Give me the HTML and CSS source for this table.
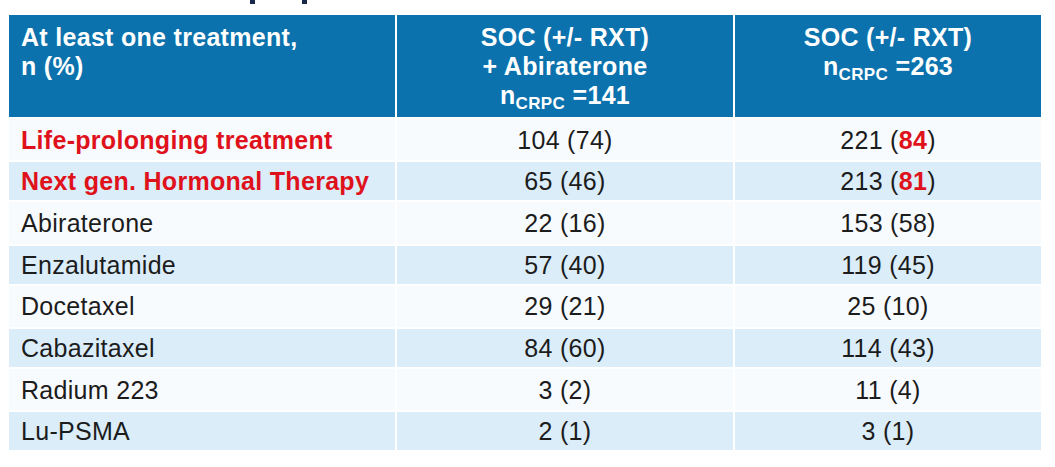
FILE: index.html
```html
<!DOCTYPE html>
<html>
<head>
<meta charset="utf-8">
<link rel="stylesheet" href="styles.css">
</head>
<body>
<div class="title-cut"><span class="stub"></span><span class="stub"></span></div>
<div class="table">
  <div class="row head">
    <div class="cell left"><span>At least one treatment,<br>n (%)</span></div>
    <div class="cell"><span>SOC (+/- RXT)<br>+ Abiraterone<br>n<sub>CRPC</sub> =141</span></div>
    <div class="cell"><span>SOC (+/- RXT)<br>n<sub>CRPC</sub> =263</span></div>
  </div>
  <div class="row light">
    <div class="cell left red b"><span>Life-prolonging treatment</span></div>
    <div class="cell"><span>104 (74)</span></div>
    <div class="cell"><span>221 (<span class="red b">84</span>)</span></div>
  </div>
  <div class="row blue">
    <div class="cell left red b"><span>Next gen. Hormonal Therapy</span></div>
    <div class="cell"><span>65 (46)</span></div>
    <div class="cell"><span>213 (<span class="red b">81</span>)</span></div>
  </div>
  <div class="row light">
    <div class="cell left"><span>Abiraterone</span></div>
    <div class="cell"><span>22 (16)</span></div>
    <div class="cell"><span>153 (58)</span></div>
  </div>
  <div class="row blue">
    <div class="cell left"><span>Enzalutamide</span></div>
    <div class="cell"><span>57 (40)</span></div>
    <div class="cell"><span>119 (45)</span></div>
  </div>
  <div class="row light">
    <div class="cell left"><span>Docetaxel</span></div>
    <div class="cell"><span>29 (21)</span></div>
    <div class="cell"><span>25 (10)</span></div>
  </div>
  <div class="row blue">
    <div class="cell left"><span>Cabazitaxel</span></div>
    <div class="cell"><span>84 (60)</span></div>
    <div class="cell"><span>114 (43)</span></div>
  </div>
  <div class="row light">
    <div class="cell left"><span>Radium 223</span></div>
    <div class="cell"><span>3 (2)</span></div>
    <div class="cell"><span>11 (4)</span></div>
  </div>
  <div class="row blue">
    <div class="cell left"><span>Lu-PSMA</span></div>
    <div class="cell"><span>2 (1)</span></div>
    <div class="cell"><span>3 (1)</span></div>
  </div>
</div>
</body>
</html>
```
FILE: styles.css
```css
html, body {
  margin: 0;
  padding: 0;
  background: #ffffff;
}
body {
  font-family: "Liberation Sans", Arial, sans-serif;
  color: #1c1c1c;
  width: 1055px;
  height: 467px;
  overflow: hidden;
}
.title-cut {
  height: 15px;
  display: flex;
  align-items: flex-start;
  gap: 47px;
  padding-left: 250px;
}
.stub {
  width: 5px;
  height: 4px;
  background: #17284a;
}
.table {
  margin-left: 9px;
  width: 1032px;
  display: flex;
  flex-direction: column;
  gap: 2px;
}
.row {
  display: grid;
  grid-template-columns: 386px 336px 306px;
  column-gap: 2px;
}
.cell {
  display: flex;
  align-items: center;
  justify-content: center;
  text-align: center;
  font-size: 25px;
  letter-spacing: 0.3px;
  line-height: 28px;
}
.cell.left {
  justify-content: flex-start;
  text-align: left;
  padding-left: 12px;
}
.head {
  height: 102px;
}
.head .cell {
  background: #0b72ad;
  color: #ffffff;
  font-weight: bold;
  line-height: 29px;
  align-items: flex-start;
  padding-top: 8px;
  box-sizing: border-box;
}
.head sub {
  font-size: 17px;
  letter-spacing: 0.4px;
  line-height: 0;
  vertical-align: -5px;
}
.light {
  height: 41.33px;
}
.light .cell {
  background: #f8fbfe;
}
.blue {
  height: 38px;
}
.blue .cell {
  background: #dbedf9;
}
.red {
  color: #df121c;
}
.b {
  font-weight: bold;
}
```
